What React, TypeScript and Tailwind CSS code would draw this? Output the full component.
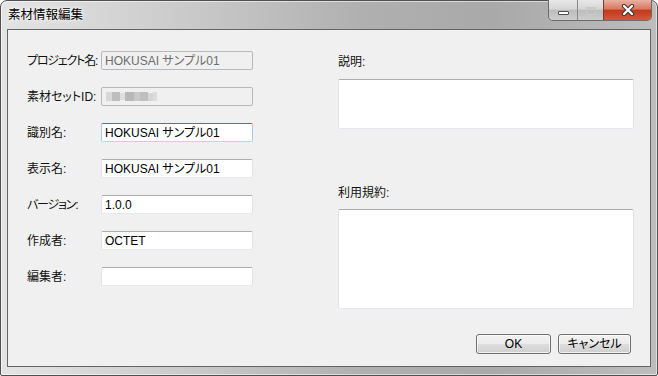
import React from "react";

const FONT = "font-['Liberation_Sans','Noto_Sans_CJK_JP',sans-serif] [font-feature-settings:'palt']";

function Field({ label, value, kind, tight }: { label: string; value?: string; kind: "disabled" | "focus" | "normal" | "blur"; tight?: boolean }) {
  let box = "border border-t-[#abadb3] border-x-[#e2e3ea] border-b-[#e3e9ef] bg-white text-black";
  if (kind === "disabled" || kind === "blur") box = "border border-[#b5b9bd] bg-[#f0f0f0] text-[#6d6d6d]";
  if (kind === "focus") box = "border border-t-[#3d7bad] border-x-[#a4c9e3] border-b-[#b7d9ed] bg-white text-black";
  return (
    <div className="flex items-center h-[19px]">
      <div className={`w-[74px] text-[12px] leading-[14px] text-[#111] whitespace-nowrap ${tight ? "tracking-[-1.2px]" : ""}`}>{label}</div>
      <div className={`w-[152px] h-[19px] rounded-[2px] pl-[3px] flex items-center text-[12px] leading-[14px] whitespace-nowrap ${box}`}>
        {kind === "blur" ? (
          <div className="flex items-center pl-[1px] blur-[0.6px]">
            <div className="w-[6px] h-[9px] bg-[#d8d8d8]" />
            <div className="w-[8px] h-[9px] bg-[#bdbdbd]" />
            <div className="w-[5px] h-[7px] bg-[#dedede]" />
            <div className="w-[9px] h-[9px] bg-[#b8b8b8]" />
            <div className="w-[6px] h-[9px] bg-[#c9c9c9]" />
            <div className="w-[8px] h-[9px] bg-[#bfbfbf]" />
            <div className="w-[5px] h-[8px] bg-[#d6d6d6]" />
            <div className="w-[4px] h-[9px] bg-[#dcdcdc]" />
          </div>
        ) : (
          value
        )}
      </div>
    </div>
  );
}

function Btn({ children, w }: { children: React.ReactNode; w: string }) {
  return (
    <div
      className={`${w} h-[20px] rounded-[3px] border border-[#707070] flex items-center justify-center text-[12px] leading-[14px] text-black bg-[linear-gradient(180deg,#f2f2f2_0%,#ebebeb_48%,#dddddd_52%,#cfcfcf_100%)] shadow-[inset_0_0_0_1px_rgba(255,255,255,0.7)]`}
    >
      {children}
    </div>
  );
}

export default function App() {
  return (
    <div className={`w-[658px] h-[376px] bg-white ${FONT}`}>
      <div className="flex flex-col w-full h-full border border-[#505050] rounded-t-[7px] rounded-b-[2px] px-[6px] pb-[8px] bg-[linear-gradient(90deg,#e4e4e4_0%,#cdcdcd_25%,#b0b0b0_55%,#a9a9a9_75%,#bdbdbd_100%)] shadow-[inset_0_0_0_1px_rgba(255,255,255,0.55)]">
        {/* title bar */}
        <div className="h-[28px] flex items-start shrink-0">
          <div className="pl-[1px] pt-[6px] text-[12.5px] leading-[16px] text-black [text-shadow:0_0_6px_rgba(255,255,255,0.9),0_0_3px_rgba(255,255,255,0.9)]">
            素材情報編集
          </div>
          <div className="ml-auto -mt-px -mr-px flex h-[21px] border border-t-0 border-[#6b6b6b] rounded-b-[5px] overflow-hidden">
            <div className="w-[28px] h-full flex items-end justify-center pb-[5px] bg-[linear-gradient(180deg,#e8e8e8_0%,#d6d6d6_45%,#bcbcbc_52%,#cdcdcd_100%)]">
              <div className="w-[11px] h-[4px] bg-white border border-[#4a4a4a] rounded-[1px]" />
            </div>
            <div className="w-[26px] h-full border-l border-[#8a8a8a] flex items-center justify-center bg-[linear-gradient(180deg,#e8e8e8_0%,#d6d6d6_45%,#bcbcbc_52%,#cdcdcd_100%)]">
              <div className="w-[10px] h-[8px] border border-[#c9c9c9] border-t-[2px] bg-transparent mt-[1px]" />
            </div>
            <div className="w-[48px] h-full border-l border-[#7a3a2a] flex items-center justify-center bg-[linear-gradient(180deg,#eab2a3_0%,#d9775f_45%,#c2391b_52%,#d4583b_100%)]">
              <svg width="14" height="12" viewBox="0 0 14 12">
                <path d="M3 2 L11 10 M11 2 L3 10" stroke="#3a3a3a" strokeWidth="4.2" strokeLinecap="round" />
                <path d="M3 2 L11 10 M11 2 L3 10" stroke="#ffffff" strokeWidth="2.2" strokeLinecap="round" />
              </svg>
            </div>
          </div>
        </div>
        {/* client area */}
        <div className="flex-1 flex flex-col border border-[#646464] bg-[#f0f0f0]">
          <div className="flex items-start">
            <div className="flex flex-col gap-[17px] pl-[19px] pt-[21px]">
              <Field label="プロジェクト名:" value="HOKUSAI サンプル01" kind="disabled" tight />
              <Field label="素材セットID:" kind="blur" />
              <Field label="識別名:" value="HOKUSAI サンプル01" kind="focus" />
              <Field label="表示名:" value="HOKUSAI サンプル01" kind="normal" />
              <Field label="バージョン:" value="1.0.0" kind="normal" tight />
              <Field label="作成者:" value="OCTET" kind="normal" />
              <Field label="編集者:" value="" kind="normal" />
            </div>
            <div className="ml-[85px] pt-[25px] flex flex-col w-[296px]">
              <div className="h-[14px] text-[12px] leading-[14px] text-[#111]">説明:</div>
              <div className="mt-[10px] h-[50px] rounded-[2px] bg-white border border-t-[#abadb3] border-x-[#e2e3ea] border-b-[#e3e9ef]" />
              <div className="mt-[57px] h-[14px] text-[12px] leading-[14px] text-[#111]">利用規約:</div>
              <div className="mt-[9px] h-[100px] rounded-[2px] bg-white border border-t-[#abadb3] border-x-[#e2e3ea] border-b-[#e3e9ef]" />
            </div>
          </div>
          <div className="mt-auto flex justify-end gap-[7px] pr-[19px] pb-[12px]">
            <Btn w="w-[75px]">OK</Btn>
            <Btn w="w-[73px]">キャンセル</Btn>
          </div>
        </div>
      </div>
    </div>
  );
}
